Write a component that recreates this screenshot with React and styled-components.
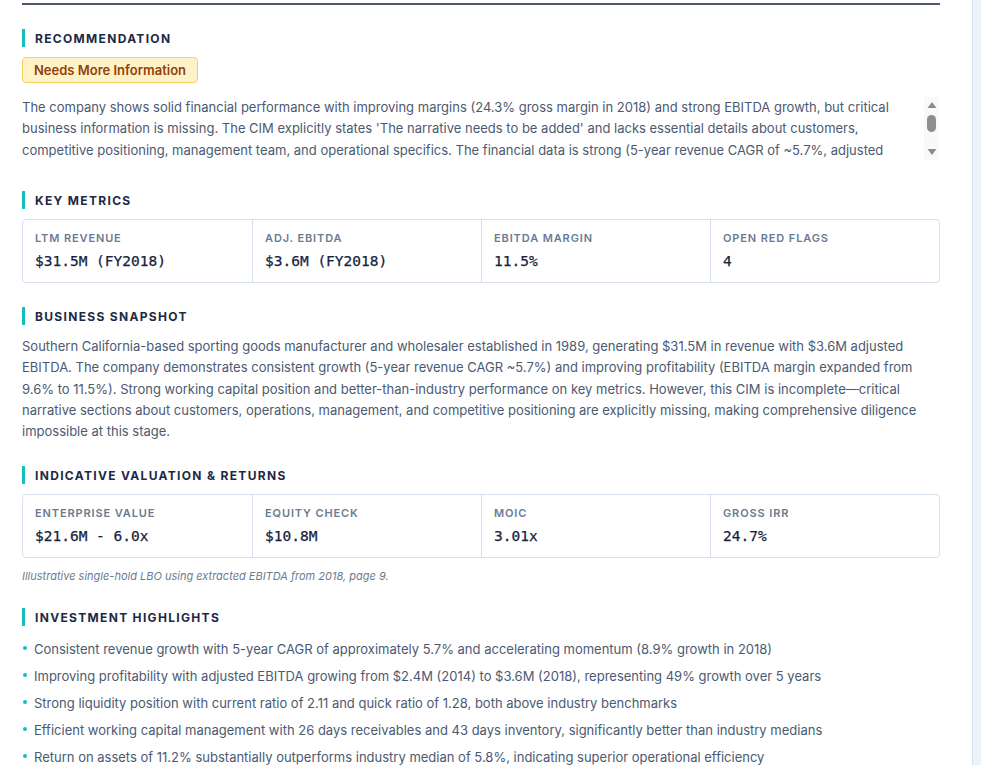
import React from "react";
import styled, { createGlobalStyle } from "styled-components";

const Global = createGlobalStyle`
  html, body { margin: 0; padding: 0; background: #ffffff; }
  body { font-family: Inter, "Noto Sans", sans-serif; -webkit-font-smoothing: antialiased; }
  * { box-sizing: border-box; }
`;

const Shell = styled.div`
  display: flex;
  width: 981px;
  height: 765px;
  overflow: hidden;
`;

const Main = styled.main`
  width: 972px;
  flex: none;
  background: #ffffff;
  padding: 3px 32px 0 22px;
`;

const Gutter = styled.aside`
  flex: 1;
  background: #eef2f9;
  border-left: 1px solid #d5dfee;
`;

const Sheet = styled.div`
  border-top: 2px solid #4a5970;
  padding-top: 24px;
  display: flex;
  flex-direction: column;
  gap: 24px;
`;

const Section = styled.section`
  display: flex;
  flex-direction: column;
`;

const Heading = styled.h2`
  margin: 0 0 10px;
  border-left: 3px solid #17bfbc;
  padding-left: 10px;
  height: 18px;
  display: flex;
  align-items: center;
  font-size: 12px;
  font-weight: 700;
  letter-spacing: 0.11em;
  text-transform: uppercase;
  color: #1c2a45;
`;

const Badge = styled.span`
  align-self: flex-start;
  display: inline-flex;
  align-items: center;
  height: 26px;
  padding: 0 11px;
  background: #fef3c7;
  border: 1px solid #fbd05a;
  border-radius: 4px;
  color: #92400e;
  font-size: 13px;
  font-weight: 600;
  margin-bottom: 14px;
`;

const Text = styled.p`
  margin: ${(p) => (p.$lead ? "1px 0 0" : "0")};
  font-size: 13px;
  line-height: 21.3px;
  color: #4b5a72;
`;

const ScrollBox = styled.div`
  display: flex;
  height: 63px;
  margin-bottom: 7px;
  padding-right: 1px;
`;

const ClipText = styled(Text)`
  flex: 1;
  height: 100%;
  overflow: hidden;
  padding-right: 14px;
`;

const Scrollbar = styled.div`
  width: 15px;
  flex: none;
  background: #f9f9f9;
  display: flex;
  flex-direction: column;
  align-items: center;
`;

const ArrowBtn = styled.div`
  height: 15px;
  width: 15px;
  display: flex;
  align-items: ${(p) => (p.$down ? "flex-start" : "flex-end")};
  justify-content: center;
  padding: ${(p) => (p.$down ? "4px 0 0" : "0 0 4px")};
  margin-top: ${(p) => (p.$down ? "auto" : "0")};
`;

const Thumb = styled.div`
  width: 9px;
  height: 17px;
  margin-top: 3px;
  border-radius: 5px;
  background: #8e8e8e;
`;

const MetricGrid = styled.div`
  display: grid;
  grid-template-columns: repeat(4, 1fr);
  border: 1px solid #d6e0ed;
  border-radius: 4px;
`;

const Metric = styled.div`
  padding: 11px 12px 11px;
  border-left: ${(p) => (p.$first ? "none" : "1px solid #d6e0ed")};
  display: flex;
  flex-direction: column;
  gap: 6px;
`;

const MetricLabel = styled.span`
  font-size: 11px;
  line-height: 14px;
  font-weight: 600;
  letter-spacing: 0.08em;
  text-transform: uppercase;
  color: #6b7b93;
`;

const MetricValue = styled.span`
  font-family: "DejaVu Sans Mono", "Liberation Mono", monospace;
  font-size: 14.5px;
  line-height: 20px;
  font-weight: 400;
  color: #17233d;
  -webkit-text-stroke: 0.25px #17233d;
`;

const Caption = styled.p`
  margin: 10px 0 0;
  font-size: 11px;
  line-height: 16px;
  font-style: italic;
  color: #6b7b93;
`;

const List = styled.ul`
  list-style: none;
  margin: 3px 0 0;
  padding: 0;
  display: flex;
  flex-direction: column;
  gap: 5.7px;
`;

const Item = styled.li`
  position: relative;
  padding-left: 12px;
  font-size: 13px;
  line-height: 21.3px;
  color: #4b5a72;

  &::before {
    content: "";
    position: absolute;
    left: 1px;
    top: 7px;
    width: 4px;
    height: 4px;
    border-radius: 50%;
    background: #17bfbc;
  }
`;

const keyMetrics = [
  ["LTM Revenue", "$31.5M (FY2018)"],
  ["Adj. EBITDA", "$3.6M (FY2018)"],
  ["EBITDA Margin", "11.5%"],
  ["Open Red Flags", "4"],
];

const valuation = [
  ["Enterprise Value", "$21.6M - 6.0x"],
  ["Equity Check", "$10.8M"],
  ["MOIC", "3.01x"],
  ["Gross IRR", "24.7%"],
];

const highlights = [
  "Consistent revenue growth with 5-year CAGR of approximately 5.7% and accelerating momentum (8.9% growth in 2018)",
  "Improving profitability with adjusted EBITDA growing from $2.4M (2014) to $3.6M (2018), representing 49% growth over 5 years",
  "Strong liquidity position with current ratio of 2.11 and quick ratio of 1.28, both above industry benchmarks",
  "Efficient working capital management with 26 days receivables and 43 days inventory, significantly better than industry medians",
  "Return on assets of 11.2% substantially outperforms industry median of 5.8%, indicating superior operational efficiency",
];

function Metrics({ items }) {
  return (
    <MetricGrid>
      {items.map(([label, value], i) => (
        <Metric key={label} $first={i === 0}>
          <MetricLabel>{label}</MetricLabel>
          <MetricValue>{value}</MetricValue>
        </Metric>
      ))}
    </MetricGrid>
  );
}

function Triangle({ down }) {
  return (
    <svg width="10" height="6" viewBox="0 0 10 6">
      <path d={down ? "M0.5 0 L9.5 0 L5 6 Z" : "M0.5 6 L9.5 6 L5 0 Z"} fill="#8c8c8c" />
    </svg>
  );
}

export default function App() {
  return (
    <>
      <Global />
      <Shell>
        <Main>
          <Sheet>
            <Section>
              <Heading>Recommendation</Heading>
              <Badge>Needs More Information</Badge>
              <ScrollBox>
                <ClipText>
                  The company shows solid financial performance with improving margins (24.3% gross margin in 2018) and strong EBITDA growth, but critical business information is missing. The CIM explicitly states 'The narrative needs to be added' and lacks essential details about customers, competitive positioning, management team, and operational specifics. The financial data is strong (5-year revenue CAGR of ~5.7%, adjusted EBITDA growth of 49% over five years, and above-median liquidity and return metrics), but without understanding the customer base, concentration risks, competitive dynamics and the depth of the management bench, it is not possible to form a confident investment view. We recommend requesting the missing narrative sections, a customer concentration schedule and management biographies before advancing to a formal indication of interest.
                </ClipText>
                <Scrollbar aria-hidden="true">
                  <ArrowBtn>
                    <Triangle />
                  </ArrowBtn>
                  <Thumb />
                  <ArrowBtn $down>
                    <Triangle down />
                  </ArrowBtn>
                </Scrollbar>
              </ScrollBox>
            </Section>

            <Section>
              <Heading>Key Metrics</Heading>
              <Metrics items={keyMetrics} />
            </Section>

            <Section>
              <Heading>Business Snapshot</Heading>
              <Text $lead>
                Southern California-based sporting goods manufacturer and wholesaler established in 1989, generating $31.5M in revenue with $3.6M adjusted EBITDA. The company demonstrates consistent growth (5-year revenue CAGR ~5.7%) and improving profitability (EBITDA margin expanded from 9.6% to 11.5%). Strong working capital position and better-than-industry performance on key metrics. However, this CIM is incomplete—critical narrative sections about customers, operations, management, and competitive positioning are explicitly missing, making comprehensive diligence impossible at this stage.
              </Text>
            </Section>

            <Section>
              <Heading>Indicative Valuation &amp; Returns</Heading>
              <Metrics items={valuation} />
              <Caption>Illustrative single-hold LBO using extracted EBITDA from 2018, page 9.</Caption>
            </Section>

            <Section>
              <Heading>Investment Highlights</Heading>
              <List>
                {highlights.map((h) => (
                  <Item key={h}>{h}</Item>
                ))}
              </List>
            </Section>
          </Sheet>
        </Main>
        <Gutter />
      </Shell>
    </>
  );
}
